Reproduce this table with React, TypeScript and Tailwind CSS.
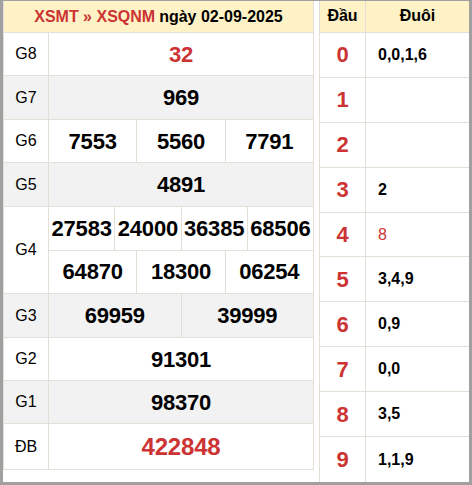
const RED = "text-[#cc3333]";

type Prize = { label: string; values: string[][]; red?: boolean; big?: boolean; h: string };

const prizes: Prize[] = [
  { label: "G8", values: [["32"]], red: true, h: "h-[43px]" },
  { label: "G7", values: [["969"]], h: "h-[44px]" },
  { label: "G6", values: [["7553", "5560", "7791"]], h: "h-[43px]" },
  { label: "G5", values: [["4891"]], h: "h-[44px]" },
  {
    label: "G4",
    values: [
      ["27583", "24000", "36385", "68506"],
      ["64870", "18300", "06254"],
    ],
    h: "h-[87px]",
  },
  { label: "G3", values: [["69959", "39999"]], h: "h-[44px]" },
  { label: "G2", values: [["91301"]], h: "h-[43px]" },
  { label: "G1", values: [["98370"]], h: "h-[43px]" },
  { label: "ĐB", values: [["422848"]], red: true, big: true, h: "h-[46px]" },
];

const loto: { head: string; tail: string; redTail?: boolean }[] = [
  { head: "0", tail: "0,0,1,6" },
  { head: "1", tail: "" },
  { head: "2", tail: "" },
  { head: "3", tail: "2" },
  { head: "4", tail: "8", redTail: true },
  { head: "5", tail: "3,4,9" },
  { head: "6", tail: "0,9" },
  { head: "7", tail: "0,0" },
  { head: "8", tail: "3,5" },
  { head: "9", tail: "1,1,9" },
];

function PrizeRow({ prize, index }: { prize: Prize; index: number }) {
  const bg = index % 2 === 1 ? "bg-[#f2f2f2]" : "bg-white";
  return (
    <div className={`flex border-b border-[#e3ded6] ${prize.h} ${bg}`}>
      <div className="flex w-[45px] shrink-0 items-center justify-center border-r border-[#e3ded6] text-[16px] text-black">
        {prize.label}
      </div>
      <div className="flex min-w-0 flex-1 flex-col">
        {prize.values.map((line, i) => (
          <div
            key={i}
            className={`flex flex-1 ${i < prize.values.length - 1 ? "border-b border-[#e3ded6]" : ""}`}
          >
            {line.map((v, j) => (
              <div
                key={j}
                className={`flex flex-1 items-center justify-center font-bold tracking-[-0.2px] ${
                  prize.big ? "text-[24px]" : "text-[22px]"
                } ${prize.red ? RED : "text-black"} ${
                  j < line.length - 1 ? "border-r border-[#e3ded6]" : ""
                }`}
              >
                {v}
              </div>
            ))}
          </div>
        ))}
      </div>
    </div>
  );
}

export default function App() {
  return (
    <div className="h-[485px] w-[472px] font-['Liberation_Sans',Arial,sans-serif]">
      <div className="flex h-full w-full gap-[5px] border-x-[3px] border-t border-b-[3px] border-[#a0a0a0] bg-white">
        <div className="flex w-[311px] shrink-0 flex-col self-start border-l border-r border-[#e3ded6]">
          <div className="flex h-[32px] items-center justify-center border-b border-[#e3ded6] bg-[#fff2c6] text-[16px] font-bold">
            <span className={RED}>XSMT » XSQNM</span>
            <span className="ml-[4px] text-black">ngày 02-09-2025</span>
          </div>
          {prizes.map((p, i) => (
            <PrizeRow key={p.label} prize={p} index={i} />
          ))}
        </div>
        <div className="flex w-[150px] shrink-0 flex-col border-l border-[#e3ded6]">
          <div className="flex h-[32px] border-b border-[#e3ded6] bg-[#fff2c6] text-[16px] font-bold text-black">
            <div className="flex w-[46px] items-center justify-center border-r border-[#e3ded6]">Đầu</div>
            <div className="flex flex-1 items-center justify-center">Đuôi</div>
          </div>
          {loto.map((r) => (
            <div key={r.head} className="flex h-[45px] border-b border-[#e3ded6] last:border-b-0">
              <div className={`flex w-[46px] items-center justify-center border-r border-[#e3ded6] text-[22px] font-bold ${RED}`}>
                {r.head}
              </div>
              <div
                className={`flex flex-1 items-center pl-[12px] text-[16px] ${
                  r.redTail ? `${RED} font-normal` : "font-bold text-black"
                }`}
              >
                {r.tail}
              </div>
            </div>
          ))}
        </div>
      </div>
    </div>
  );
}
